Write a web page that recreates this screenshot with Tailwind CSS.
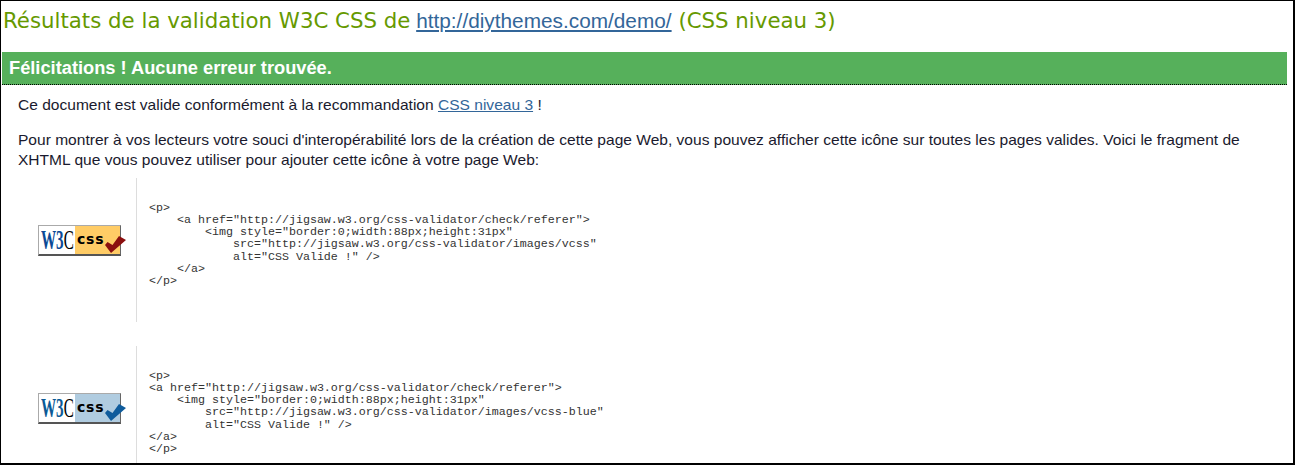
<!DOCTYPE html>
<html lang="fr">
<head>
<meta charset="utf-8">
<title>Résultats de la validation W3C CSS</title>
<script src="https://cdn.jsdelivr.net/npm/@tailwindcss/browser@4"></script>
</head>
<body class="bg-white overflow-hidden">
<div class="w-[1295px] h-[465px] border border-black border-r-2 border-b-2 overflow-hidden font-['Liberation_Sans',Arial,sans-serif] text-[15.55px] text-[#1a1a2e]">
    <!-- titre -->
    <h2 class="h-[51px] pl-[2px] pt-[5px] text-[21.3px] leading-[30px] text-[#669900] font-['DejaVu_Sans',Verdana,sans-serif]">
        Résultats de la validation W3C CSS de<span class="ml-[-1px]"> </span><a href="#" class="font-['Liberation_Sans',Arial,sans-serif] text-[20.8px] text-[#336699] underline">http://diythemes.com/demo/</a> (CSS niveau 3)
    </h2>

    <!-- bandeau -->
    <div class="ml-px w-[1285px] h-[33px] bg-[#56b05b] border-b border-dotted border-black pl-[7px] text-[18.25px] leading-[31px] font-bold text-white">Félicitations ! Aucune erreur trouvée.</div>

    <div class="pl-[17px] pr-[20px]">
        <p class="mt-[9px] leading-[21px]">Ce document est valide conformément à la recommandation <a href="#" class="text-[#336699] underline">CSS niveau 3</a> !</p>
        <p class="mt-[15px] leading-[20px]">Pour montrer à vos lecteurs votre souci d'interopérabilité lors de la création de cette page Web, vous pouvez afficher cette icône sur toutes les pages valides. Voici le fragment de XHTML que vous pouvez utiliser pour ajouter cette icône à votre page Web:</p>
    </div>

    <!-- icône orange -->
    <div class="mt-[8px] flex h-[144px]">
        <div class="w-[136px] border-r border-[#dddddd] flex items-center pl-[37px] pb-[19px]">
            <div class="relative w-[83px] h-[31px] flex bg-white border border-[#aaaaaa] border-r-[#666666] border-b-2 border-b-[#555555]">
                <span class="w-[36px] pl-[2px] overflow-hidden"><span class="block origin-left scale-x-[0.56] text-[27px] leading-[28px] font-bold whitespace-nowrap text-[#0b4a96] font-['Liberation_Serif',serif]">W3<span class="text-black font-normal">C</span></span></span>
                <span class="flex-1 bg-[#ffcc66] pl-[2px] text-[14px] leading-[27px] font-bold tracking-[0.8px] text-black font-['DejaVu_Sans',sans-serif]">css</span>
                <svg class="absolute left-[66px] top-[10px]" width="21" height="17" viewBox="0 0 21 17"><path d="M0 9L2.500 6 7.500 9 14 0 21 4 6 17z" fill="#8b0f0f"/></svg>
            </div>
        </div>
        <pre class="pl-[12px] self-center pb-[11px] font-['Liberation_Mono','Courier_New',monospace] text-[11.67px] leading-[12.1px] text-[#333333]">&lt;p&gt;
    &lt;a href="http://jigsaw.w3.org/css-validator/check/referer"&gt;
        &lt;img style="border:0;width:88px;height:31px"
            src="http://jigsaw.w3.org/css-validator/images/vcss"
            alt="CSS Valide !" /&gt;
    &lt;/a&gt;
&lt;/p&gt;</pre>
    </div>

    <!-- icône bleue -->
    <div class="mt-[24px] flex h-[144px]">
        <div class="w-[136px] border-r border-[#dddddd] flex items-center pl-[37px] pb-[19px]">
            <div class="relative w-[83px] h-[31px] flex bg-white border border-[#aaaaaa] border-r-[#666666] border-b-2 border-b-[#555555]">
                <span class="w-[36px] pl-[2px] overflow-hidden"><span class="block origin-left scale-x-[0.56] text-[27px] leading-[28px] font-bold whitespace-nowrap text-[#0b5a96] font-['Liberation_Serif',serif]">W3<span class="text-black font-normal">C</span></span></span>
                <span class="flex-1 bg-[#b0cce0] pl-[2px] text-[14px] leading-[27px] font-bold tracking-[0.8px] text-black font-['DejaVu_Sans',sans-serif]">css</span>
                <svg class="absolute left-[66px] top-[10px]" width="21" height="17" viewBox="0 0 21 17"><path d="M0 9L2.500 6 7.500 9 14 0 21 4 6 17z" fill="#0f5c9c"/></svg>
            </div>
        </div>
        <pre class="pl-[12px] self-center pb-[11px] font-['Liberation_Mono','Courier_New',monospace] text-[11.67px] leading-[12.1px] text-[#333333]">&lt;p&gt;
&lt;a href="http://jigsaw.w3.org/css-validator/check/referer"&gt;
    &lt;img style="border:0;width:88px;height:31px"
        src="http://jigsaw.w3.org/css-validator/images/vcss-blue"
        alt="CSS Valide !" /&gt;
&lt;/a&gt;
&lt;/p&gt;</pre>
    </div>
</div>
</body>
</html>
